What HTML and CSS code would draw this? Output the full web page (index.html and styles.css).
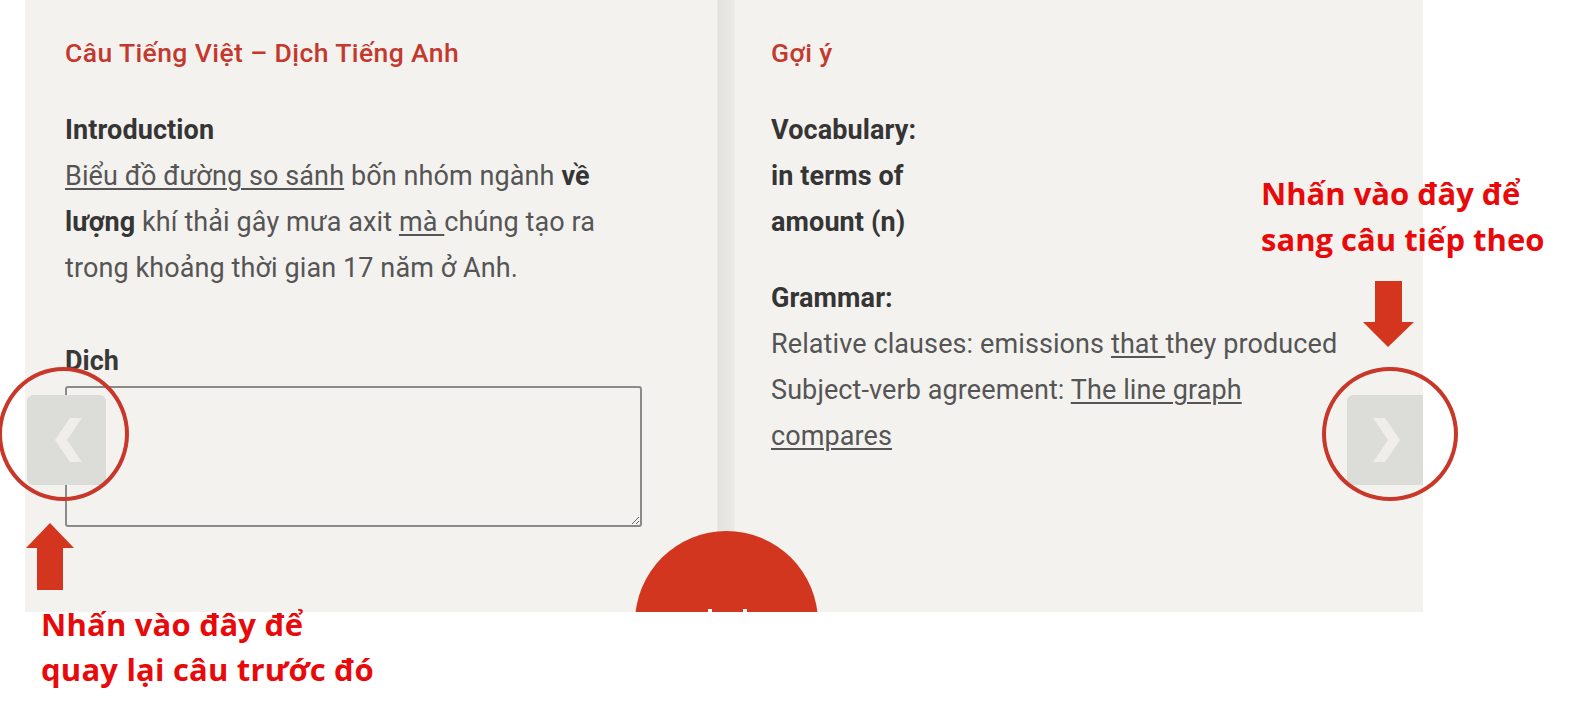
FILE: index.html
```html
<!DOCTYPE html>
<html lang="vi">
<head>
<meta charset="utf-8">
<title>Câu Tiếng Việt – Dịch Tiếng Anh</title>
<link rel="stylesheet" href="styles.css">
</head>
<body>
<div class="stage">
  <div class="board">
    <section class="panel panel-left">
      <h2 class="panel-title">Câu Tiếng Việt – Dịch Tiếng Anh</h2>
      <p class="para intro"><strong>Introduction</strong><br><u>Biểu đồ đường so sánh</u> bốn nhóm ngành <strong>về lượng</strong> khí thải gây mưa axit <u>mà </u>chúng tạo ra trong khoảng thời gian 17 năm ở Anh.</p>
      <label class="field-label" for="answer">Dich</label>
      <textarea id="answer" class="answer"></textarea>
    </section>
    <div class="divider"></div>
    <section class="panel panel-right">
      <h2 class="panel-title">Gợi ý</h2>
      <p class="para"><strong>Vocabulary:<br>in terms of<br>amount (n)</strong></p>
      <p class="para grammar"><strong>Grammar:</strong><br>Relative clauses: emissions <u>that </u>they produced<br>Subject-verb agreement: <u>The line graph<br>compares</u></p>
    </section>
    <button class="nav nav-prev" aria-label="Câu trước">
      <svg width="28" height="44" viewBox="0 0 28 44"><path d="M27 0 H15 L0 22 L15 44 H27 L12 22 Z" fill="#efeeeb"/></svg>
    </button>
    <button class="nav nav-next" aria-label="Câu tiếp theo">
      <svg width="28" height="44" viewBox="0 0 28 44"><path d="M1 0 H13 L28 22 L13 44 H1 L16 22 Z" fill="#efeeeb"/></svg>
    </button>
    <div class="submit"><span class="tick a"></span><span class="tick b"></span></div>
  </div>

  <div class="ring ring-prev"></div>
  <div class="ring ring-next"></div>

  <svg class="arrow arrow-up" width="50" height="68" viewBox="0 0 50 68">
    <path d="M24 0 L48 25 L37 25 L37 67 L11 67 L11 25 L0 25 Z" fill="#d3351f"/>
  </svg>
  <svg class="arrow arrow-down" width="52" height="67" viewBox="0 0 52 67">
    <path d="M12 0 H39 V41 H51 L25 66 L0 41 H12 Z" fill="#d3351f"/>
  </svg>

  <p class="note note-next">Nhấn vào đây để<br>sang câu tiếp theo</p>
  <p class="note note-prev">Nhấn vào đây để<br>quay lại câu trước đó</p>
</div>
</body>
</html>
```

FILE: styles.css
```css
html, body {
  margin: 0;
  padding: 0;
  background: #ffffff;
}

.stage {
  position: relative;
  width: 1596px;
  height: 715px;
  overflow: hidden;
  font-family: Roboto, "Noto Sans", sans-serif;
}

.board {
  position: relative;
  margin-left: 25px;
  width: 1398px;
  height: 612px;
  display: flex;
  overflow: hidden;
  background: #f4f2ef;
}

.panel {
  box-sizing: border-box;
  padding-top: 37px;
}

.panel-left {
  width: 693px;
  padding-left: 40px;
  border-right: 1px solid #ebe9e6;
}

.divider {
  width: 17px;
  background: linear-gradient(90deg, #e3e2df 0%, #e7e6e3 60%, #ecebe8 100%);
}

.panel-right {
  flex: 1;
  padding-left: 36px;
}

.panel-title {
  margin: 0;
  font-size: 26.5px;
  line-height: 31px;
  font-weight: 500;
  letter-spacing: 0.4px;
  color: #c4392e;
}

.para {
  margin: 39px 0 0;
  width: 576px;
  font-size: 27px;
  line-height: 46px;
  letter-spacing: 0.1px;
  color: #555555;
}

.para strong {
  font-weight: 700;
  color: #353535;
}

.para u {
  text-decoration-thickness: 2px;
  text-underline-offset: 3px;
}

.grammar {
  margin-top: 30px;
  width: 620px;
}

.field-label {
  display: block;
  margin-top: 47px;
  font-size: 27px;
  line-height: 46px;
  font-weight: 700;
  color: #383838;
}

.answer {
  display: block;
  box-sizing: border-box;
  margin-top: 2px;
  width: 577px;
  height: 141px;
  border: 2px solid #8a8a8a;
  border-radius: 3px;
  background: transparent;
  resize: vertical;
}

.nav {
  position: absolute;
  top: 395px;
  width: 79px;
  height: 90px;
  padding: 0;
  border: 0;
  border-radius: 6px;
  background: #dcdcd8;
  display: flex;
  align-items: center;
  justify-content: center;
}

.nav-prev {
  left: 2px;
}

.nav-prev svg {
  margin-left: 5px;
}

.nav-next {
  left: 1322px;
  width: 84px;
}

.nav-next svg {
  margin-left: -6px;
}

.submit {
  position: absolute;
  left: 610px;
  top: 531px;
  width: 183px;
  height: 183px;
  border-radius: 50%;
  background: #d2361e;
}

.tick {
  position: absolute;
  top: 78px;
  width: 4px;
  height: 8px;
  background: #ffffff;
}

.tick.a { left: 73px; }
.tick.b { left: 108px; }

.ring {
  position: absolute;
  box-sizing: border-box;
  border: 4px solid #c8382a;
  border-radius: 50%;
}

.ring-prev {
  left: -2px;
  top: 367px;
  width: 131px;
  height: 134px;
}

.ring-next {
  left: 1322px;
  top: 367px;
  width: 136px;
  height: 134px;
}

.arrow {
  position: absolute;
  display: block;
}

.arrow-up {
  left: 26px;
  top: 523px;
}

.arrow-down {
  left: 1363px;
  top: 281px;
}

.note {
  position: absolute;
  margin: 0;
  font-family: "Open Sans", "Noto Sans", sans-serif;
  font-weight: 700;
  font-size: 31px;
  color: #e80a0a;
  white-space: nowrap;
}

.note-next {
  left: 1261px;
  top: 170px;
  line-height: 46px;
}

.note-prev {
  left: 41px;
  top: 602px;
  line-height: 45px;
  letter-spacing: 0.2px;
}
```
